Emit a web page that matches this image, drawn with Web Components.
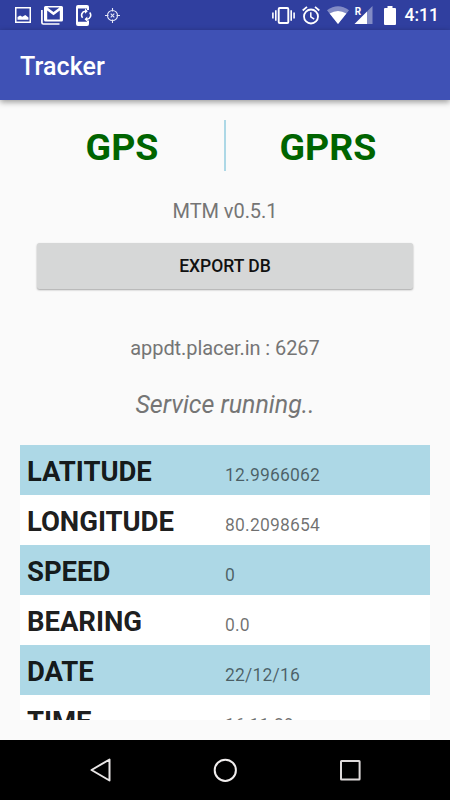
<!DOCTYPE html>
<html lang="en">
<head>
<meta charset="UTF-8" />
<title>Tracker</title>
<style>
  body {
    margin: 0;
    background: #fafafa;
    font-family: Roboto, sans-serif;
    color: #757575;
  }
</style>
</head>
<body>
<tracker-app></tracker-app>

<script>
// [width, height, markup]
const icons = {
  image: [16, 16, `<path fill="#fff" fill-rule="evenodd" d="M0 0h16v16H0zM1.5 1.5v13h13v-13z"/><path fill="#fff" d="M2.500 12.800V10l2.600-1.500 2.200 1.200 3-1.700 3.200 2.400v2.400z"/>`],
  gmail: [22, 19, `<path fill="none" stroke="#fff" stroke-width="1.700" d="M.9 4v12.600q0 1.400 1.400 1.400H18.500"/><path fill="#fff" fill-rule="evenodd" d="M4.500 0h16Q22 0 22 1.500v12.400q0 1.500-1.500 1.500h-16Q3 15.400 3 13.900V1.500Q3 0 4.500 0zM6.500 1.500h12l-6 4.500zM6.200 4.600v9h12.600v-9L12.500 9.300z"/>`],
  phoneSync: [16, 21, `<path fill="#fff" fill-rule="evenodd" d="M2 0h9q2 0 2 2v3h-2V3.500H2v13.300h9V15.500h2V19q0 2-2 2H2q-2 0-2-2V2Q0 0 2 0z"/><path fill="none" stroke="#fff" stroke-width="1.600" d="M6.600 12.800a4 4 0 0 1 2.700-6.600M13.700 7.600a4 4 0 0 1-2.700 6.600"/><path fill="#fff" d="M9 3.600v5.200l2.800-2.600zM11.300 11.600v5.200L8.500 14.200z"/>`],
  target: [15, 15, `<g fill="none" stroke="#e6e8f8" stroke-width="1.100"><circle cx="7.500" cy="7.500" r="5"/><path d="M7.500 0v3.500M7.500 11.500V15M0 7.500h3.500M11.500 7.500H15M5.700 5.700l3.600 3.600M9.300 5.700 5.700 9.300"/></g>`],
  vibrate: [23, 17, `<rect x="6.700" y="1" width="9.600" height="15" rx="1" fill="none" stroke="#fff" stroke-width="1.900"/><path fill="none" stroke="#fff" stroke-width="1.600" d="M3.800 3.200v10.600M19.200 3.200v10.600M.9 5.500v6M22.100 5.500v6"/>`],
  alarm: [18, 19, `<g fill="none" stroke="#fff"><circle cx="9" cy="10.500" r="7" stroke-width="1.800"/><path stroke-width="1.500" d="M8.800 6.200v4.700l3.400 2.200"/><path stroke-width="1.800" d="M.7 4.500 5 .9M17.300 4.500 13 .9"/></g>`],
  wifi: [22, 18, `<path fill="#fff" opacity=".4" d="M0 4.200Q11-3.800 22 4.200L11 18z"/><path fill="#fff" d="M2.600 7.600Q11 2.400 19.400 7.600L11 18z"/>`],
  signal: [19, 18, `<path fill="#fff" opacity=".4" d="M18.500 0v18H13V5.500z"/><path fill="#fff" d="M13 5.500V18H.5z"/><text x="0.800" y="8.500" font-family="Roboto, sans-serif" font-size="10" font-weight="700" fill="#fff">R</text>`],
  battery: [12, 19, `<path fill="#fff" d="M3.500 0h5v2H11q1 0 1 1v15q0 1-1 1H1q-1 0-1-1V3q0-1 1-1h2.500z"/>`],
  back: [21, 24, `<path fill="none" stroke="#e9e6e6" stroke-width="2" stroke-linejoin="round" d="M19.500 1.500v21L1.500 12z"/>`],
  home: [24, 24, `<circle cx="12.300" cy="12.300" r="10.600" fill="none" stroke="#f1eeee" stroke-width="2"/>`],
  recent: [22, 22, `<rect x="2" y="2" width="18.600" height="18.600" rx=".5" fill="none" stroke="#dedada" stroke-width="2"/>`],
};

class SysIcon extends HTMLElement {
  constructor() {
    super();
    this.attachShadow({ mode: "open" });
  }

  connectedCallback() {
    const [w, h, markup] = icons[this.getAttribute("name")];
    this.shadowRoot.innerHTML = `
      <style>
        :host { display: block; flex: none; }
        svg { display: block; }
      </style>
      <svg width="${w}" height="${h}" viewBox="0 0 ${w} ${h}">${markup}</svg>`;
  }
}
customElements.define("sys-icon", SysIcon);

// Registers an element whose shadow root is a clone of the given markup
function define(name, html) {
  const template = document.createElement("template");
  template.innerHTML = html;
  customElements.define(name, class extends HTMLElement {
    constructor() {
      super();
      this.attachShadow({ mode: "open" });
      this.shadowRoot.appendChild(template.content.cloneNode(true));
    }
  });
}

define("status-bar", `
<style>
  :host {
    display: flex;
    align-items: center;
    justify-content: space-between;
    box-sizing: border-box;
    height: 30px;
    padding: 0 11px 0 15px;
    background: #303f9f;
    color: #fff;
  }
  .group { display: flex; align-items: center; }
  .left { gap: 12px; }
  .time { font-size: 17.5px; font-weight: 500; line-height: 31px; margin-left: 9px; }
</style>
<div class="group left">
  <sys-icon name="image"></sys-icon>
  <sys-icon name="gmail" style="margin-left: -2px"></sys-icon>
  <sys-icon name="phoneSync" style="margin-left: 1px"></sys-icon>
  <sys-icon name="target" style="margin-left: 1px"></sys-icon>
</div>
<div class="group">
  <sys-icon name="vibrate"></sys-icon>
  <sys-icon name="alarm" style="margin-left: 7px"></sys-icon>
  <sys-icon name="wifi" style="margin-left: 7px"></sys-icon>
  <sys-icon name="signal" style="margin-left: 5px"></sys-icon>
  <sys-icon name="battery" style="margin-left: 11px"></sys-icon>
  <span class="time"><slot></slot></span>
</div>
`);

define("app-toolbar", `
<style>
  :host {
    display: flex;
    align-items: center;
    box-sizing: border-box;
    height: 70px;
    padding: 2px 20px 0;
    background: #3f51b5;
    color: #fff;
    font-size: 25px;
    font-weight: 500;
    letter-spacing: .1px;
    box-shadow: 0 2px 6px rgba(0, 0, 0, .4);
    z-index: 1;
  }
</style>
<slot></slot>
`);

define("signal-status", `
<style>
  :host {
    display: grid;
    grid-template-columns: 1fr 2px 1fr;
    grid-template-rows: 51px;
    height: 51px;
    margin: 20px 20px 0;
    line-height: 55px;
    text-align: center;
    font-size: 37.5px;
    font-weight: 700;
    color: #006400;
  }
  .divider { background: #add8e6; }
</style>
<slot name="left"></slot>
<div class="divider"></div>
<slot name="right"></slot>
`);

define("raised-button", `
<style>
  :host { display: block; padding: 0 37px; }
  button {
    display: block;
    width: 100%;
    height: 46px;
    padding: 0;
    border: 0;
    border-radius: 2.5px;
    background: #d6d7d7;
    box-shadow: 0 1px 2px rgba(0, 0, 0, .35);
    font: 500 17.5px/47px Roboto, sans-serif;
    color: #111;
  }
</style>
<button><slot></slot></button>
`);

define("data-row", `
<style>
  :host {
    display: grid;
    grid-template-columns: 1fr 1fr;
    align-items: baseline;
    height: 50px;
    line-height: 53px;
    background: #fff;
  }
  :host(:nth-child(odd)) { background: #add8e6; }
  .label { padding-left: 7px; font-size: 27.5px; font-weight: 700; letter-spacing: -.05px; color: rgba(0, 0, 0, .9); }
  .value { font-size: 17.5px; color: rgba(0, 0, 0, .56); letter-spacing: .2px; }
</style>
<span class="label"><slot name="label"></slot></span>
<span class="value"><slot></slot></span>
`);

define("data-table", `
<style>
  :host { display: block; height: 275px; margin: 0 20px; overflow: hidden; }
</style>
<slot></slot>
`);

define("nav-bar", `
<style>
  :host {
    display: flex;
    align-items: center;
    justify-content: space-between;
    box-sizing: border-box;
    height: 60px;
    padding: 0 89px 0 90px;
    background: #000;
  }
</style>
<sys-icon name="back"></sys-icon>
<sys-icon name="home"></sys-icon>
<sys-icon name="recent"></sys-icon>
`);

define("tracker-app", `
<style>
  :host { display: flex; flex-direction: column; width: 450px; height: 800px; overflow: hidden; }
  p { margin: 0; text-align: center; white-space: nowrap; }
  .version, .server { font-size: 20px; line-height: 24px; letter-spacing: -.07px; }
  .version { margin-top: 28px; }
  .server { margin-top: 47px; }
  .state { margin-top: 30px; font-size: 25px; line-height: 30px; font-style: italic; }
  raised-button { margin-top: 20px; }
  data-table { margin-top: 25px; }
  nav-bar { margin-top: auto; }
</style>
<status-bar>4:11</status-bar>
<app-toolbar>Tracker</app-toolbar>
<signal-status>
  <span slot="left">GPS</span>
  <span slot="right">GPRS</span>
</signal-status>
<p class="version">MTM v0.5.1</p>
<raised-button>EXPORT DB</raised-button>
<p class="server">appdt.placer.in : 6267</p>
<p class="state">Service running..</p>
<data-table>
  <data-row><span slot="label">LATITUDE</span>12.9966062</data-row>
  <data-row><span slot="label">LONGITUDE</span>80.2098654</data-row>
  <data-row><span slot="label">SPEED</span>0</data-row>
  <data-row><span slot="label">BEARING</span>0.0</data-row>
  <data-row><span slot="label">DATE</span>22/12/16</data-row>
  <data-row><span slot="label">TIME</span>16:11:29</data-row>
</data-table>
<nav-bar></nav-bar>
`);
</script>
</body>
</html>
